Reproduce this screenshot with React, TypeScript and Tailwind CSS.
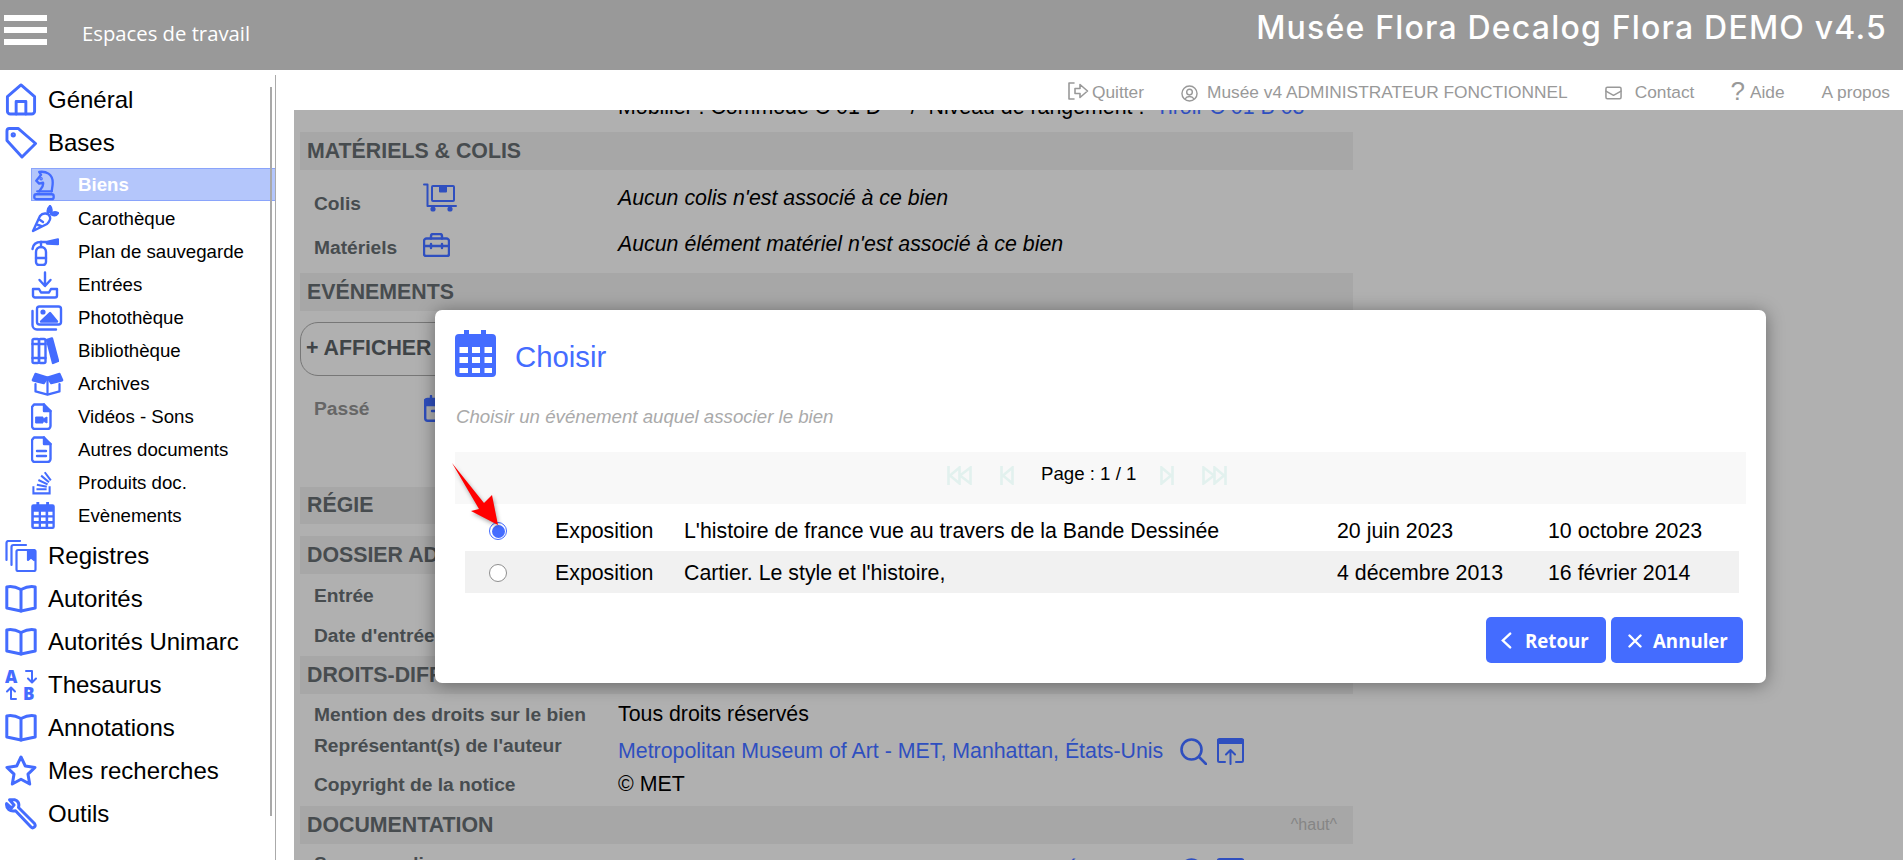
import React from "react";
import { FaStackOverflow } from "react-icons/fa";

const sans = "font-['Liberation_Sans',Arial,sans-serif]";

type IconProps = { className?: string };

function Line({ className, box, children, sw = 2.4 }: IconProps & { box: string; sw?: number; children: React.ReactNode }) {
  return (
    <svg viewBox={box} fill="none" stroke="currentColor" strokeWidth={sw} strokeLinecap="round" strokeLinejoin="round" className={className}>
      {children}
    </svg>
  );
}

const CalendarSolid = ({ className }: IconProps) => (
  <svg viewBox="0 0 41 47" className={className}>
    <path
      fillRule="evenodd"
      fill="currentColor"
      d="M9 0 H14 V4 H26 V0 H31 V4 H37 a4 4 0 0 1 4 4 V43 a4 4 0 0 1 -4 4 H4 a4 4 0 0 1 -4 -4 V8 a4 4 0 0 1 4 -4 H9 Z
         M4.5 17 V23 H13 V17 Z M17 17 V23 H25 V17 Z M29.5 17 V23 H37 V17 Z
         M4.5 27 V33 H13 V27 Z M17 27 V33 H25 V27 Z M29.5 27 V33 H37 V27 Z
         M4.5 38 V43 H13 V38 Z M17 38 V43 H25 V38 Z M29.5 38 V43 H37 V38 Z"
    />
  </svg>
);
const Home = ({ className }: IconProps) => (
  <Line className={className} box="0 0 32 34" sw={3}>
    <path d="M2 14 L16 2 L30 14 V29 a3 3 0 0 1 -3 3 H5 a3 3 0 0 1 -3 -3 Z" />
    <path d="M11 32 V19 H21 V32" />
  </Line>
);
const Tag = ({ className }: IconProps) => (
  <Line className={className} box="0 0 33 33" sw={3}>
    <path d="M1.5 4 Q1.5 1.5 4 1.5 H13 L31 17 L17 31 L1.5 14 Z" />
    <circle cx="8" cy="8" r="1.2" />
  </Line>
);
const Knight = ({ className }: IconProps) => (
  <Line className={className} box="0 0 24 32">
    <path d="M7 22 C9 19 12 17 11 13 L7 14 L4 11 L9 5 L7 2 C14 1 21 4 21 13 C21 17 20 20 20 22" />
    <circle cx="9" cy="9" r="0.6" />
    <rect x="2" y="25" width="20" height="5" rx="2" />
    <path d="M5 22 H20" />
  </Line>
);
const Carrot = ({ className }: IconProps) => (
  <Line className={className} box="0 0 28 28">
    <path d="M2 26 L9 11 C12 7 18 8 19 12 C20 15 18 17 16 19 Z" />
    <path d="M9 15 L12 17 M7 20 L10 21" />
    <path d="M17 8 C16 5 17 3 19 1 C21 3 21 5 20 8" fill="currentColor" />
    <path d="M20 9 C22 7 25 7 27 8 C25 11 22 11 20 9 Z" fill="currentColor" />
  </Line>
);
const Extinguisher = ({ className }: IconProps) => (
  <Line className={className} box="0 0 28 28">
    <path d="M10 9 C7 9 5 11 5 14 V24 a3 3 0 0 0 3 3 H12 a3 3 0 0 0 3 -3 V14 C15 11 13 9 10 9 Z" />
    <path d="M5 20 H15" />
    <path d="M10 9 V4" />
    <path d="M10 4 H16 L27 1.5 V6 L16 5.5" fill="currentColor" />
    <path d="M10 4 C5 4 2 7 1.5 11" />
  </Line>
);
const InboxIn = ({ className }: IconProps) => (
  <Line className={className} box="0 0 28 28">
    <path d="M14 1.5 V14 M8.5 9 L14 15 L19.5 9" />
    <path d="M2 18 H8 L10 21.5 H18 L20 18 H26 V24.5 a2 2 0 0 1 -2 2 H4 a2 2 0 0 1 -2 -2 Z" />
  </Line>
);
const Images = ({ className }: IconProps) => (
  <Line className={className} box="0 0 32 26">
    <rect x="6" y="1.5" width="24" height="18" rx="2.5" />
    <circle cx="12" cy="7" r="1.4" fill="currentColor" />
    <path d="M10 16.5 L19 8 L26 16.5 Z" fill="currentColor" />
    <path d="M1.5 6 V20 a4.5 4.5 0 0 0 4.5 4.5 H25" />
  </Line>
);
const Books = ({ className }: IconProps) => (
  <Line className={className} box="0 0 28 28">
    <rect x="1.5" y="2" width="6.5" height="24" rx="1.5" />
    <rect x="8" y="2" width="6.5" height="24" rx="1.5" />
    <path d="M1.5 7 H14.5 M1.5 21 H14.5" />
    <path d="M16 3 L21 1.5 L27 24 L22 26 Z" fill="currentColor" />
  </Line>
);
const BoxOpen = ({ className }: IconProps) => (
  <Line className={className} box="0 0 34 26">
    <path d="M17 6 L4 2 L1 9 L13 12 Z" fill="currentColor" />
    <path d="M17 6 L30 2 L33 9 L21 12 Z" fill="currentColor" />
    <path d="M4 13 V21 L17 24.5 L30 21 V13" />
    <path d="M17 8 V24" />
  </Line>
);
const FileVideo = ({ className }: IconProps) => (
  <Line className={className} box="0 0 21 27">
    <path d="M3 1.5 H13 L19.5 8 V23 a3 3 0 0 1 -3 3 H4 a3 3 0 0 1 -3 -3 V4 Z" />
    <path d="M13 1.5 V8 H19.5" fill="currentColor" />
    <path d="M5 14 H12 V20 H5 Z M12 16 L16 14 V20 L12 18 Z" fill="currentColor" strokeWidth="1" />
  </Line>
);
const FileDoc = ({ className }: IconProps) => (
  <Line className={className} box="0 0 21 27">
    <path d="M3 1.5 H13 L19.5 8 V23 a3 3 0 0 1 -3 3 H4 a3 3 0 0 1 -3 -3 V4 Z" />
    <path d="M13 1.5 V8 H19.5" fill="currentColor" />
    <path d="M6 15 H15 M6 20 H15" />
  </Line>
);
const Albums = ({ className }: IconProps) => (
  <Line className={className} box="0 0 32 32" sw={2.2}>
    <path d="M1.5 20 V3 a2 2 0 0 1 2 -2 H15" />
    <path d="M6.5 25 V7 a2 2 0 0 1 2 -2 H21" />
    <rect x="11.5" y="10" width="19" height="21" rx="1.5" />
    <path d="M23 10 V20 L26 17.5 L29 20 V10" fill="currentColor" />
  </Line>
);
const BookOpen = ({ className }: IconProps) => (
  <Line className={className} box="0 0 32 29" sw={3}>
    <path d="M1.8 3 C6 2 11 3 16 5.5 C21 3 26 2 30.2 3 V24 L16 27 L1.8 24 Z" />
    <path d="M16 5.5 V27" />
  </Line>
);
const Star = ({ className }: IconProps) => (
  <Line className={className} box="0 0 32 31" sw={3}>
    <path d="M16 2 L20.3 11 L30 12.4 L23 19.2 L24.7 29 L16 24.3 L7.3 29 L9 19.2 L2 12.4 L11.7 11 Z" />
  </Line>
);
const Wrench = ({ className }: IconProps) => (
  <Line className={className} box="0 0 32 32" sw={3}>
    <path d="M10 1.8 L4.5 1.8 L9 7 L6.5 10 L1.6 5.5 C1 11 5 14 10.5 12.8 L26 29 C28 31 31.5 28.5 29.5 25.5 L13.5 9.5 C14.5 5.5 13.5 3 10 1.8 Z" />
  </Line>
);
const SortAB = ({ className }: IconProps) => (
  <svg viewBox="0 0 32 32" className={className} fill="none" stroke="currentColor" strokeWidth="2" strokeLinecap="round" strokeLinejoin="round">
    <text x="0" y="14" fill="currentColor" stroke="none" fontSize="17" fontWeight="800" fontFamily="Open Sans, sans-serif">A</text>
    <text x="18" y="31" fill="currentColor" stroke="none" fontSize="17" fontWeight="800" fontFamily="Open Sans, sans-serif">B</text>
    <path d="M21 2 H27 V13 M23 9.5 L27 13.5 L31 9.5" />
    <path d="M11 30 H6 V19 M2 22.5 L6 18.5 L10 22.5" />
  </svg>
);
const Dolly = ({ className }: IconProps) => (
  <Line className={className} box="0 0 34 29" sw={2}>
    <path d="M1 1.5 H4.5 V23 H33" />
    <rect x="9" y="3" width="22" height="15" rx="1" />
    <path d="M17 3 V8.5 H23 V3" fill="currentColor" />
    <circle cx="10" cy="26" r="1.6" fill="currentColor" />
    <circle cx="27" cy="26" r="1.6" fill="currentColor" />
  </Line>
);
const Toolbox = ({ className }: IconProps) => (
  <Line className={className} box="0 0 27 24" sw={2.4}>
    <path d="M1 13 V8 a2.5 2.5 0 0 1 2.5 -2.5 H23.5 a2.5 2.5 0 0 1 2.5 2.5 V21 a2 2 0 0 1 -2 2 H3 a2 2 0 0 1 -2 -2 V13 H26" />
    <path d="M8 5.5 V3 a2 2 0 0 1 2 -2 H17 a2 2 0 0 1 2 2 V5.5" />
    <path d="M8 11 V15 M19 11 V15" />
  </Line>
);
const CalendarLine = ({ className }: IconProps) => (
  <Line className={className} box="0 0 24 27" sw={2.4}>
    <rect x="1.2" y="4" width="21.6" height="21.8" rx="2.5" />
    <path d="M1.2 5 H22.8 V10 H1.2 Z" fill="currentColor" />
    <path d="M7 1 V4 M17 1 V4" />
    <path d="M8 16 H16" />
  </Line>
);
const Search = ({ className }: IconProps) => (
  <Line className={className} box="0 0 27 27" sw={2.6}>
    <circle cx="11.5" cy="11.5" r="10" />
    <path d="M19 19 L26 26" />
  </Line>
);
const WindowUp = ({ className }: IconProps) => (
  <Line className={className} box="0 0 27 27" sw={2}>
    <path d="M8 24 H2.5 a1.5 1.5 0 0 1 -1.5 -1.5 V2.5 a1.5 1.5 0 0 1 1.5 -1.5 H24.5 a1.5 1.5 0 0 1 1.5 1.5 V22.5 a1.5 1.5 0 0 1 -1.5 1.5 H19" />
    <path d="M1 2 H26 V5 H1 Z" fill="currentColor" />
    <path d="M13.5 26 V12 M9 16.5 L13.5 12 L18 16.5" />
  </Line>
);
const Quit = ({ className }: IconProps) => (
  <Line className={className} box="0 0 22 20" sw={1.6}>
    <path d="M7 2 H2 V18 H7" />
    <path d="M8 7.5 H13 V3.5 L20.5 10 L13 16.5 V12.5 H8 Z" />
  </Line>
);
const UserCircle = ({ className }: IconProps) => (
  <Line className={className} box="0 0 18 18" sw={1.5}>
    <circle cx="9" cy="9" r="8" />
    <circle cx="9" cy="7.5" r="3" />
    <path d="M4.5 14.5 C6 11.5 12 11.5 13.5 14.5" />
  </Line>
);
const Mail = ({ className }: IconProps) => (
  <Line className={className} box="0 0 18 14" sw={1.6}>
    <rect x="1" y="1" width="16" height="12" rx="1.5" />
    <path d="M1 5 L9 9.5 L17 5" />
  </Line>
);
const PagerArrows = ({ className, dir, n }: IconProps & { dir: "l" | "r"; n: 1 | 2 }) => (
  <svg viewBox={n === 2 ? "0 0 25 19" : "0 0 14 19"} className={className} fill="none" stroke="currentColor" strokeWidth="2.6">
    {dir === "l" ? (
      n === 2 ? (
        <path d="M1.5 0 V19 M12.5 1.5 L3 9.5 L12.5 17.5 Z M23.5 1.5 L13 9.5 L23.5 17.5 Z" />
      ) : (
        <path d="M1.5 0 V19 M12.5 1.5 L3 9.5 L12.5 17.5 Z" />
      )
    ) : n === 2 ? (
      <path d="M23.5 0 V19 M12.5 1.5 L22 9.5 L12.5 17.5 Z M1.5 1.5 L12 9.5 L1.5 17.5 Z" />
    ) : (
      <path d="M12.5 0 V19 M1.5 1.5 L11 9.5 L1.5 17.5 Z" />
    )}
  </svg>
);

const subItems: { label: string; icon: React.ReactNode; active?: boolean }[] = [
  { label: "Biens", icon: <Knight className="h-[31px] w-[24px]" />, active: true },
  { label: "Carothèque", icon: <Carrot className="h-[28px] w-[28px]" /> },
  { label: "Plan de sauvegarde", icon: <Extinguisher className="h-[28px] w-[28px]" /> },
  { label: "Entrées", icon: <InboxIn className="h-[28px] w-[28px]" /> },
  { label: "Photothèque", icon: <Images className="h-[26px] w-[32px]" /> },
  { label: "Bibliothèque", icon: <Books className="h-[28px] w-[28px]" /> },
  { label: "Archives", icon: <BoxOpen className="h-[24px] w-[33px]" /> },
  { label: "Vidéos - Sons", icon: <FileVideo className="h-[27px] w-[21px]" /> },
  { label: "Autres documents", icon: <FileDoc className="h-[27px] w-[21px]" /> },
  { label: "Produits doc.", icon: <FaStackOverflow className="h-[26px] w-[22px]" /> },
  { label: "Evènements", icon: <CalendarSolid className="h-[27px] w-[24px]" /> },
];

function MainItem({ label, icon }: { label: string; icon: React.ReactNode }) {
  return (
    <div className="flex h-[43px] items-center">
      <span className="flex w-[49px] shrink-0 pl-[5px] text-[#446cff]">{icon}</span>
      <span className="-ml-[1px] text-[24px] text-black">{label}</span>
    </div>
  );
}

function Sidebar() {
  return (
    <aside className={`${sans} relative w-[276px] shrink-0 bg-white pt-[8px]`}>
      <div className="absolute bottom-0 right-0 top-[5px] w-px bg-[#aaaaaa]" />
      <div className="absolute right-[4px] top-[17px] h-[729px] w-[2px] bg-[#a9a9a9]" />
      <MainItem label="Général" icon={<Home className="h-[33px] w-[32px]" />} />
      <MainItem label="Bases" icon={<Tag className="h-[32px] w-[33px]" />} />
      <div className="pb-[3px] pt-[4px]">
        {subItems.map((s) => (
          <div
            key={s.label}
            className={`ml-[31px] flex h-[33px] items-center ${s.active ? "border border-[#8aa4fb] bg-[#b4c6fb] pt-[1px] font-bold text-white" : "pt-[2px] text-black"}`}
          >
            <span className={`flex shrink-0 text-[#446cff] ${s.active ? "w-[46px]" : "w-[47px]"}`}>{s.icon}</span>
            <span className="text-[18.67px]">{s.label}</span>
          </div>
        ))}
      </div>
      <MainItem label="Registres" icon={<Albums className="h-[32px] w-[32px]" />} />
      <MainItem label="Autorités" icon={<BookOpen className="h-[29px] w-[32px]" />} />
      <MainItem label="Autorités Unimarc" icon={<BookOpen className="h-[29px] w-[32px]" />} />
      <MainItem label="Thesaurus" icon={<SortAB className="h-[32px] w-[32px]" />} />
      <MainItem label="Annotations" icon={<BookOpen className="h-[29px] w-[32px]" />} />
      <MainItem label="Mes recherches" icon={<Star className="h-[31px] w-[32px]" />} />
      <MainItem label="Outils" icon={<Wrench className="h-[32px] w-[32px]" />} />
    </aside>
  );
}

function TopNav() {
  return (
    <nav className={`${sans} flex h-[40px] shrink-0 items-center justify-end bg-white pr-[13px] pt-[6px] text-[17.33px] text-[#999999]`}>
      <Quit className="-mt-[4px] h-[20px] w-[22px]" />
      <span className="ml-[3px]">Quitter</span>
      <UserCircle className="ml-[37px] h-[17px] w-[17px]" />
      <span className="ml-[9px]">Musée v4 ADMINISTRATEUR FONCTIONNEL</span>
      <Mail className="ml-[37px] h-[14px] w-[17px]" />
      <span className="ml-[13px]">Contact</span>
      <span className="-mt-[4px] ml-[36px] text-[26px] leading-none">?</span>
      <span className="ml-[5px]">Aide</span>
      <span className="ml-[37px]">A propos</span>
    </nav>
  );
}

function Bar({ title, haut, className = "" }: { title: string; haut?: boolean; className?: string }) {
  return (
    <div className={`flex h-[38px] items-center justify-between bg-[#a7a7a7] pl-[7px] pr-[16px] pt-[2px] ${className}`}>
      <span className="text-[21.33px] font-bold text-[#474c4f]">{title}</span>
      {haut && <span className="-mt-[2px] text-[16px] text-[#858585]">^haut^</span>}
    </div>
  );
}

function Row({ height, label, icon, labelClass = "", valueClass = "", children }: { height: string; label: string; icon?: React.ReactNode; labelClass?: string; valueClass?: string; children?: React.ReactNode }) {
  return (
    <div className={`grid grid-cols-[304px_1fr] items-center pl-[14px] ${height}`}>
      <div className="flex items-center text-[19.2px] font-bold text-[#474c4f]">
        <span className={`${icon ? "w-[109px]" : ""} ${labelClass}`}>{label}</span>
        {icon}
      </div>
      <div className={`text-[21.33px] text-black ${valueClass}`}>{children}</div>
    </div>
  );
}

function MetLink() {
  return (
    <div className="flex items-center text-[#2f4fbf]">
      <span>Metropolitan Museum of Art - MET, Manhattan, États-Unis</span>
      <Search className="ml-[17px] h-[27px] w-[27px]" />
      <WindowUp className="ml-[10px] h-[27px] w-[27px]" />
    </div>
  );
}

function Content() {
  return (
    <div className={`${sans} min-h-0 flex-1 overflow-hidden bg-white pl-[18px]`}>
      <div className="h-full overflow-hidden bg-[#b0b0b0] pl-[6px]">
        <div className="-mt-[20px] w-[1053px]">
          <div className="h-[42px] pl-[318px] pt-[5px] text-[21.33px] leading-[24px] text-black">
            Mobilier : Commode C 01 D&nbsp;&nbsp;&nbsp;&nbsp;&nbsp;/&nbsp;&nbsp;Niveau de rangement :&nbsp; <span className="text-[#2f4fbf]">Tiroir C 01 B 03</span>
          </div>
          <Bar title="MATÉRIELS & COLIS" />
          <Row height="h-[55px]" label="Colis" labelClass="pt-[13px]" valueClass="pt-[2px]" icon={<Dolly className="h-[29px] w-[34px] text-[#2f4fbf]" />}>
            <i>Aucun colis n'est associé à ce bien</i>
          </Row>
          <Row height="h-[48px]" label="Matériels" labelClass="-mt-[2px]" valueClass="-mt-[9px]" icon={<Toolbox className="-mt-[8px] h-[24px] w-[27px] text-[#2f4fbf]" />}>
            <i>Aucun élément matériel n'est associé à ce bien</i>
          </Row>
          <Bar title="EVÉNEMENTS" />
          <div className="mt-[11px] flex h-[54px] w-[420px] items-center rounded-[18px] border border-[#777777] pl-[5px] text-[21.33px] font-bold text-[#3f4447]">
            + AFFICHER TOUT
          </div>
          <Row height="h-[66px]" label="Passé" labelClass="text-[#666666]" icon={<CalendarLine className="ml-[1px] h-[27px] w-[24px] text-[#2f4fbf]" />} />
          <div className="h-[45px]" />
          <Bar title="RÉGIE" className="!h-[37px] !pt-[0px]" />
          <div className="h-[12px]" />
          <Bar title="DOSSIER ADMINISTRATIF" />
          <Row height="h-[41px] pt-[3px]" label="Entrée" />
          <Row height="h-[41px] pt-[2px]" label="Date d'entrée" />
          <Bar title="DROITS-DIFFUSION" />
          <Row height="h-[35px] pt-[5px]" label="Mention des droits sur le bien">
            Tous droits réservés
          </Row>
          <Row height="h-[35px]" label="Représentant(s) de l'auteur" labelClass="-mt-[5px]" valueClass="pt-[7px]">
            <MetLink />
          </Row>
          <Row height="h-[42px]" label="Copyright de la notice">
            © MET
          </Row>
          <Bar title="DOCUMENTATION" haut />
          <Row height="h-[48px] pt-[8px]" label="Source audio" labelClass="-mt-[16px]">
            <MetLink />
          </Row>
        </div>
      </div>
    </div>
  );
}

function EventRow({ type, title, start, end, checked, className = "" }: { type: string; title: string; start: string; end: string; checked?: boolean; className?: string }) {
  return (
    <div className={`flex h-[42px] items-center pt-[3px] text-[21.33px] text-black ${className}`}>
      <span className="-mt-[1px] ml-[24px] flex w-[66px] shrink-0">
        {checked ? (
          <span className="flex h-[18px] w-[18px] items-center justify-center rounded-full border border-[#446cff] bg-white">
            <span className="h-[13px] w-[13px] rounded-full bg-[#446cff]" />
          </span>
        ) : (
          <span className="h-[18px] w-[18px] rounded-full border border-[#8f8f8f] bg-white" />
        )}
      </span>
      <span className="w-[129px] shrink-0">{type}</span>
      <span className="w-[653px] shrink-0">{title}</span>
      <span className="w-[211px] shrink-0">{start}</span>
      <span>{end}</span>
    </div>
  );
}

function Modal() {
  return (
    <div className={`${sans} absolute left-[435px] top-[310px] h-[373px] w-[1331px] rounded-[7px] bg-white pl-[20px] pr-[20px] pt-[20px] shadow-[0_2px_18px_rgba(0,0,0,0.4)]`}>
      <div className="flex h-[47px] items-center">
        <CalendarSolid className="h-[47px] w-[41px] text-[#446cff]" />
        <span className="ml-[19px] pt-[6px] text-[29.33px] text-[#446cff]">Choisir</span>
      </div>
      <div className="ml-[1px] mt-[28px] text-[18.67px] italic leading-[24px] text-[#aaaaaa]">Choisir un événement auquel associer le bien</div>
      <div className="mt-[23px] flex h-[52px] items-start bg-[#f8f8f8] pl-[492px] pt-[12px] text-[#e2f1ee]">
        <PagerArrows dir="l" n={2} className="mt-[2px] h-[19px] w-[25px]" />
        <PagerArrows dir="l" n={1} className="ml-[28px] mt-[2px] h-[19px] w-[14px]" />
        <span className="-mt-[1px] ml-[27px] w-[119px] text-[18.67px] leading-[22px] text-black">Page : 1 / 1</span>
        <PagerArrows dir="r" n={1} className="mt-[2px] h-[19px] w-[14px]" />
        <PagerArrows dir="r" n={2} className="ml-[28px] mt-[2px] h-[19px] w-[25px]" />
      </div>
      <div className="mt-[5px] pl-[10px] pr-[7px]">
        <EventRow type="Exposition" title="L'histoire de france vue au travers de la Bande Dessinée" start="20 juin 2023" end="10 octobre 2023" checked />
        <EventRow type="Exposition" title="Cartier. Le style et l'histoire," start="4 décembre 2013" end="16 février 2014" className="bg-[#f1f1f1]" />
      </div>
      <div className="mt-[24px] flex justify-end gap-[5px] pr-[3px] font-['Open_Sans',sans-serif] text-[18.67px] font-bold text-white">
        <button className="flex h-[46px] w-[120px] items-center gap-[13px] rounded-[5px] bg-[#446cff] pl-[15px] pt-[1px]">
          <svg viewBox="0 0 12 18" className="h-[17px] w-[11px]" fill="none" stroke="currentColor" strokeWidth="2.6" strokeLinecap="round"><path d="M10 1.5 L2 9 L10 16.5" /></svg>
          Retour
        </button>
        <button className="flex h-[46px] w-[132px] items-center gap-[11px] rounded-[5px] bg-[#446cff] pl-[17px] pt-[1px]">
          <svg viewBox="0 0 14 14" className="h-[14px] w-[14px]" fill="none" stroke="currentColor" strokeWidth="2.4" strokeLinecap="round"><path d="M1.5 1.5 L12.5 12.5 M12.5 1.5 L1.5 12.5" /></svg>
          Annuler
        </button>
      </div>
    </div>
  );
}

function RedArrow() {
  return (
    <svg viewBox="0 0 50 64" className="absolute left-[451px] top-[462px] h-[64px] w-[50px] drop-shadow-[1px_2px_2px_rgba(0,0,0,0.35)]">
      <path d="M1 1 L33 41 L41 33 L47 63 L20 49 L28 47 Z" fill="#ff0000" />
    </svg>
  );
}

export default function App() {
  return (
    <div className="relative flex h-[860px] w-full flex-col overflow-hidden bg-white">
      <header className="flex h-[70px] shrink-0 items-start justify-between bg-[#999999] pr-[16px] text-white">
        <div className="flex items-start pt-[15px]">
          <div className="ml-[4px] flex w-[43px] flex-col gap-[6px]">
            <span className="h-[6px] bg-white" />
            <span className="h-[6px] bg-white" />
            <span className="h-[6px] bg-white" />
          </div>
          <span className="ml-[35px] pt-[3px] font-['Open_Sans',sans-serif] text-[20.27px]">Espaces de travail</span>
        </div>
        <h1 className="pt-[7px] font-['Inter',sans-serif] text-[32px] font-medium leading-[42px] tracking-[1.2px]">Musée Flora Decalog Flora DEMO v4.5</h1>
      </header>
      <div className="flex min-h-0 flex-1">
        <Sidebar />
        <main className="flex min-w-0 flex-1 flex-col">
          <TopNav />
          <Content />
        </main>
      </div>
      <Modal />
      <RedArrow />
    </div>
  );
}
